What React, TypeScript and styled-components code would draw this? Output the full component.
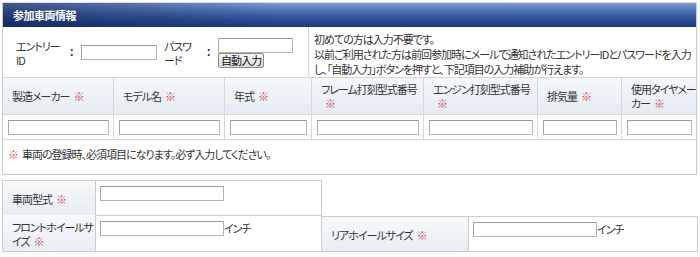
import React from 'react';
import styled, { createGlobalStyle } from 'styled-components';

const GlobalStyle = createGlobalStyle`
    body {
        margin: 0;
        background: #fff;
        font-family: "Noto Sans CJK JP", "Liberation Sans", sans-serif;
        font-size: 11px;
        letter-spacing: -1px;
        color: #333;
        font-feature-settings: "palt";
    }
`;

const columns = [
    { label: '製造メーカー', required: true },
    { label: 'モデル名', required: true },
    { label: '年式', required: true },
    { label: 'フレーム打刻型式番号', required: true },
    { label: 'エンジン打刻型式番号', required: true },
    { label: '排気量', required: true },
    { label: '使用タイヤメーカー', required: true },
];

function Mark() {
    return <Req>※</Req>;
}

export default function App() {
    return (
        <Page>
            <GlobalStyle />
            <Panel>
                <Title>参加車両情報</Title>

                <EntryRow>
                    <EntryCell>
                        <Label width={53}>
                            エントリー
                            <br />
                            ID
                        </Label>
                        <Colon>：</Colon>
                        <TextInput width={76} />
                        <Label width={42} style={{ marginLeft: 7 }}>
                            パスワ
                            <br />
                            ード
                        </Label>
                        <Colon>：</Colon>
                        <Stack>
                            <TextInput width={75} />
                            <AutoButton>自動入力</AutoButton>
                        </Stack>
                    </EntryCell>
                    <NoteCell>
                        初めての方は入力不要です。
                        <br />
                        以前ご利用された方は前回参加時にメールで通知されたエントリーIDとパスワードを入力
                        <br />
                        し、「自動入力」ボタンを押すと、下記項目の入力補助が行えます。
                    </NoteCell>
                </EntryRow>

                <Grid>
                    {columns.map((c) => (
                        <HeadCell key={c.label}>
                            <span>
                                {c.label}
                                {c.required && <Mark />}
                            </span>
                        </HeadCell>
                    ))}
                    {columns.map((c) => (
                        <InputCell key={c.label + '-in'}>
                            <TextInput />
                        </InputCell>
                    ))}
                </Grid>

                <Notice>
                    <Req>※</Req>
                    <NoticeText>車両の登録時、必須項目になります。必ず入力してください。</NoticeText>
                </Notice>
            </Panel>

            <Lower>
                <LabelCell>
                    <span>
                        車両型式
                        <Mark />
                    </span>
                </LabelCell>
                <ValueCell>
                    <TextInput width={124} />
                </ValueCell>
                <Blank />

                <LabelCell>
                    <span>
                        フロントホイールサイズ
                        <Mark />
                    </span>
                </LabelCell>
                <ValueCell>
                    <TextInput width={124} />
                    インチ
                </ValueCell>
                <LabelCell>
                    <span>
                        リアホイールサイズ
                        <Mark />
                    </span>
                </LabelCell>
                <ValueCell>
                    <TextInput width={124} />
                    インチ
                </ValueCell>
            </Lower>
        </Page>
    );
}

const Page = styled.div`
    width: 697px;
    padding: 2px 0 0 2px;
`;

const Panel = styled.div`
    border: 1px solid #c9c9c9;
    border-top-color: #dcdcdc;
    width: 693px;
`;

const Title = styled.div`
    height: 24px;
    line-height: 24px;
    padding-left: 10px;
    color: #fff;
    font-weight: bold;
    font-size: 11px;
    letter-spacing: -0.5px;
    background: linear-gradient(to right, rgba(16, 32, 76, 0.55), rgba(16, 32, 76, 0) 40%),
        linear-gradient(to bottom, #7d9bd2 0%, #4b70b4 35%, #2a4c92 70%, #1c3a7c 100%);
`;

const EntryRow = styled.div`
    display: flex;
    height: 50px;
    border-bottom: 1px solid #d3d6da;
`;

const EntryCell = styled.div`
    flex: 0 0 306px;
    border-right: 1px solid #d3d6da;
    display: flex;
    align-items: center;
    padding-left: 13px;
    box-sizing: border-box;
`;

const Label = styled.div<{ width: number }>`
    width: ${(p) => p.width}px;
    flex-shrink: 0;
    line-height: 14px;
    padding-top: 1px;
`;

const Colon = styled.span`
    width: 12px;
    flex-shrink: 0;
    font-weight: bold;
`;

const Stack = styled.div`
    display: flex;
    flex-direction: column;
    align-items: flex-start;
    margin-top: 1px;
`;

const TextInput = styled.input.attrs({ type: 'text' })<{ width?: number }>`
    box-sizing: border-box;
    flex-shrink: 0;
    width: ${(p) => (p.width ? `${p.width}px` : '100%')};
    height: 15px;
    margin: 0;
    padding: 0 2px;
    border: 1px solid #b5b5b5;
    border-top-color: #999;
    border-left-color: #a8a8a8;
    background: #fff;
    font-size: 11px;
`;

const AutoButton = styled.button`
    height: 15px;
    margin: 0;
    padding: 0 2px;
    font-family: inherit;
    font-size: 11px;
    letter-spacing: -0.9px;
    font-feature-settings: "palt";
    line-height: 12px;
    color: #111;
    background: linear-gradient(to bottom, #f6f6f6, #dcdcdc);
    border: 1px solid #8a8a8a;
    border-radius: 2px;
`;

const NoteCell = styled.div`
    flex: 1;
    min-width: 0;
    padding: 5px 0 0 5px;
    line-height: 15px;
    white-space: nowrap;
`;

const Grid = styled.div`
    display: grid;
    grid-template-columns: 111px 111px 87px 112px 114px 84px 1fr;
`;

const HeadCell = styled.div`
    height: 36px;
    display: flex;
    align-items: center;
    padding: 0 0 0 9px;
    line-height: 14px;
    background: linear-gradient(to bottom, #f5f8fb, #e4ebf2);
    border-right: 1px solid #d3d6da;
    border-bottom: 1px solid #d3d6da;
    &:nth-child(7) {
        border-right: none;
    }
`;

const InputCell = styled.div`
    height: 24px;
    display: flex;
    align-items: center;
    padding: 0 4px 0 5px;
    border-right: 1px solid #d3d6da;
    border-bottom: 1px solid #d3d6da;
    &:nth-child(14) {
        border-right: none;
    }
`;

const Notice = styled.div`
    height: 34px;
    padding: 6px 0 0 5px;
    box-sizing: border-box;
`;

const NoticeText = styled.span`
    margin-left: 4px;
`;

const Req = styled.span`
    color: #d9474f;
    margin-left: 4px;
    ${Notice} > & {
        margin-left: 0;
    }
`;

const Lower = styled.div`
    margin-top: 5px;
    width: 695px;
    display: grid;
    grid-template-columns: 93px 226px 147px 1fr;
    border-left: 1px solid #c9c9c9;
`;

const LabelCell = styled.div`
    height: 36px;
    display: flex;
    align-items: center;
    padding: 1px 0 0 9px;
    line-height: 14px;
    background: linear-gradient(to bottom, #f7f9fb, #e7edf3);
    border-top: 1px solid #ccc;
    border-right: 1px solid #ccc;
    border-bottom: 1px solid #ccc;
    box-sizing: border-box;
    &:nth-child(4) {
        border-top: none;
        margin-top: -1px;
        height: 37px;
    }
`;

const ValueCell = styled.div`
    height: 36px;
    display: flex;
    align-items: flex-start;
    padding: 5px 0 0 4px;
    box-sizing: border-box;
    border-top: 1px solid #ccc;
    border-right: 1px solid #ccc;
    border-bottom: 1px solid #ccc;
    line-height: 14px;
    &:nth-child(5) {
        border-top: none;
        margin-top: -1px;
        height: 37px;
        padding-top: 6px;
    }
`;

const Blank = styled.div`
    grid-column: span 2;
`;
